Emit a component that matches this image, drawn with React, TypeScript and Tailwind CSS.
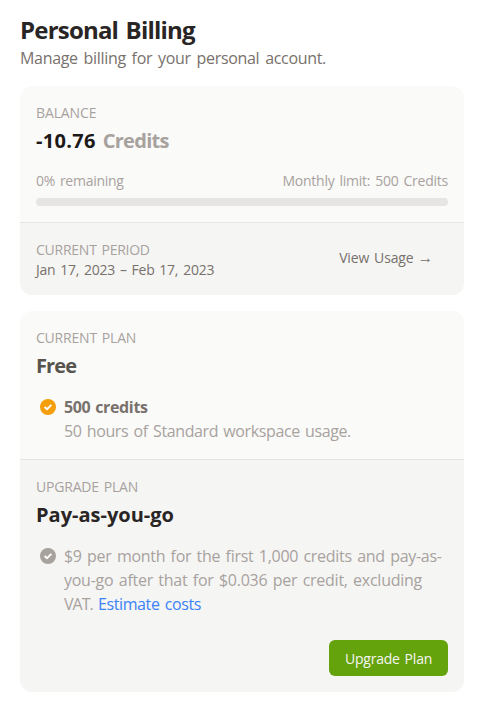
import type { ReactNode } from "react";
import clsx from "clsx";

function CheckIcon({ className }: { className?: string }) {
  return (
    <svg viewBox="0 0 16 16" className={clsx("mt-1 h-4 w-4 shrink-0", className)}>
      <circle cx="8" cy="8" r="8" fill="currentColor" />
      <path
        d="M4.6 8 7 10.2l4.4-4.4"
        fill="none"
        stroke="#fff"
        strokeWidth="1.9"
      />
    </svg>
  );
}

function Label({ children, className }: { children: ReactNode; className?: string }) {
  return (
    <div
      className={clsx(
        "pt-px text-sm leading-5 text-[#a8a29e] uppercase [word-spacing:1.5px]",
        className
      )}
    >
      {children}
    </div>
  );
}

export default function App() {
  return (
    <div className="min-h-[708px] w-[480px] bg-white pt-3.5 pr-4 pl-5 whitespace-nowrap font-['Open_Sans','Noto_Sans',sans-serif]">
      {/* Header */}
      <h1 className="text-2xl leading-8 font-bold tracking-[-0.8px] text-[#292524] [word-spacing:2px]">
        Personal Billing
      </h1>
      <p className="text-base leading-6 tracking-[-0.32px] text-[#78716c] [word-spacing:2px]">
        Manage billing for your personal account.
      </p>

      {/* Balance */}
      <section className="mt-4 overflow-hidden rounded-xl bg-[#fafaf9]">
        <div className="p-4">
          <Label className="tracking-[-0.12px]">Balance</Label>
          <div className="mt-1 flex gap-[7px] text-xl leading-7 font-bold text-[#1c1917]">
            <span className="tracking-[0.3px]">-10.76</span>
            <span className="tracking-[-0.7px] text-[#a8a29e]">Credits</span>
          </div>
          <div className="mt-4 flex justify-between text-sm leading-5 tracking-[-0.27px] text-[#a8a29e] [word-spacing:1.5px]">
            <span>0% remaining</span>
            <span className="tracking-[-0.23px]">Monthly limit: 500 Credits</span>
          </div>
          <div className="mt-[7px] h-2 rounded-full bg-[#e7e5e4]" />
        </div>
        <div className="flex h-[73px] items-center justify-between border-t border-[#e7e5e4] bg-[#f5f5f4] px-4">
          <div>
            <Label className="tracking-[-0.25px]">Current Period</Label>
            <div className="text-sm leading-5 tracking-[-0.25px] text-[#78716c] [word-spacing:1.5px]">
              Jan 17, 2023 – Feb 17, 2023
            </div>
          </div>
          <button className="flex gap-1 pr-[15px] pb-0.5 text-sm leading-5 text-[#78716c]">
            <span className="tracking-[-0.15px] [word-spacing:1.5px]">View Usage</span>
            <span className="font-['Liberation_Sans',sans-serif] text-[15.5px] leading-5">→</span>
          </button>
        </div>
      </section>

      {/* Plans */}
      <section className="mt-4 overflow-hidden rounded-xl bg-[#fafaf9]">
        <div className="p-4">
          <Label className="tracking-[-0.2px]">Current Plan</Label>
          <div className="mt-1 text-xl leading-7 font-bold tracking-[-0.9px] text-[#57534e]">
            Free
          </div>
          <div className="mt-[15px] flex gap-2 pl-1 leading-6">
            <CheckIcon className="text-[#f59e0b]" />
            <div>
              <div className="font-bold tracking-[-0.35px] text-[#78716c] [word-spacing:1px]">
                500 credits
              </div>
              <div className="tracking-[-0.39px] text-[#a8a29e] [word-spacing:1.5px]">
                50 hours of Standard workspace usage.
              </div>
            </div>
          </div>
        </div>
        <div className="border-t border-[#e7e5e4] bg-[#f5f5f4] p-4">
          <Label className="tracking-[-0.2px]">Upgrade Plan</Label>
          <div className="mt-1 text-xl leading-7 font-bold text-[#292524]">
            Pay-as-you-go
          </div>
          <div className="mt-[15px] flex gap-2 pl-1 leading-6 text-[#a8a29e]">
            <CheckIcon className="text-[#a8a29e]" />
            <div className="tracking-[-0.29px] [word-spacing:1.5px]">
              $9 per month for the first 1,000 credits and pay-as-
              <br />
              <span className="tracking-[-0.26px]">
                you-go after that for $0.036 per credit, excluding
              </span>
              <br />
              <span className="tracking-[-1px]">VAT.</span>{" "}
              <a href="#" className="tracking-[-0.4px] text-[#3b82f6]">
                Estimate costs
              </a>
            </div>
          </div>
          <div className="mt-6 flex justify-end">
            <button className="h-9 w-[119px] rounded-md bg-[#65a30d] pt-0.5 text-sm tracking-[-0.22px] text-[#f5f5f4] [word-spacing:1.5px]">
              Upgrade Plan
            </button>
          </div>
        </div>
      </section>
    </div>
  );
}
